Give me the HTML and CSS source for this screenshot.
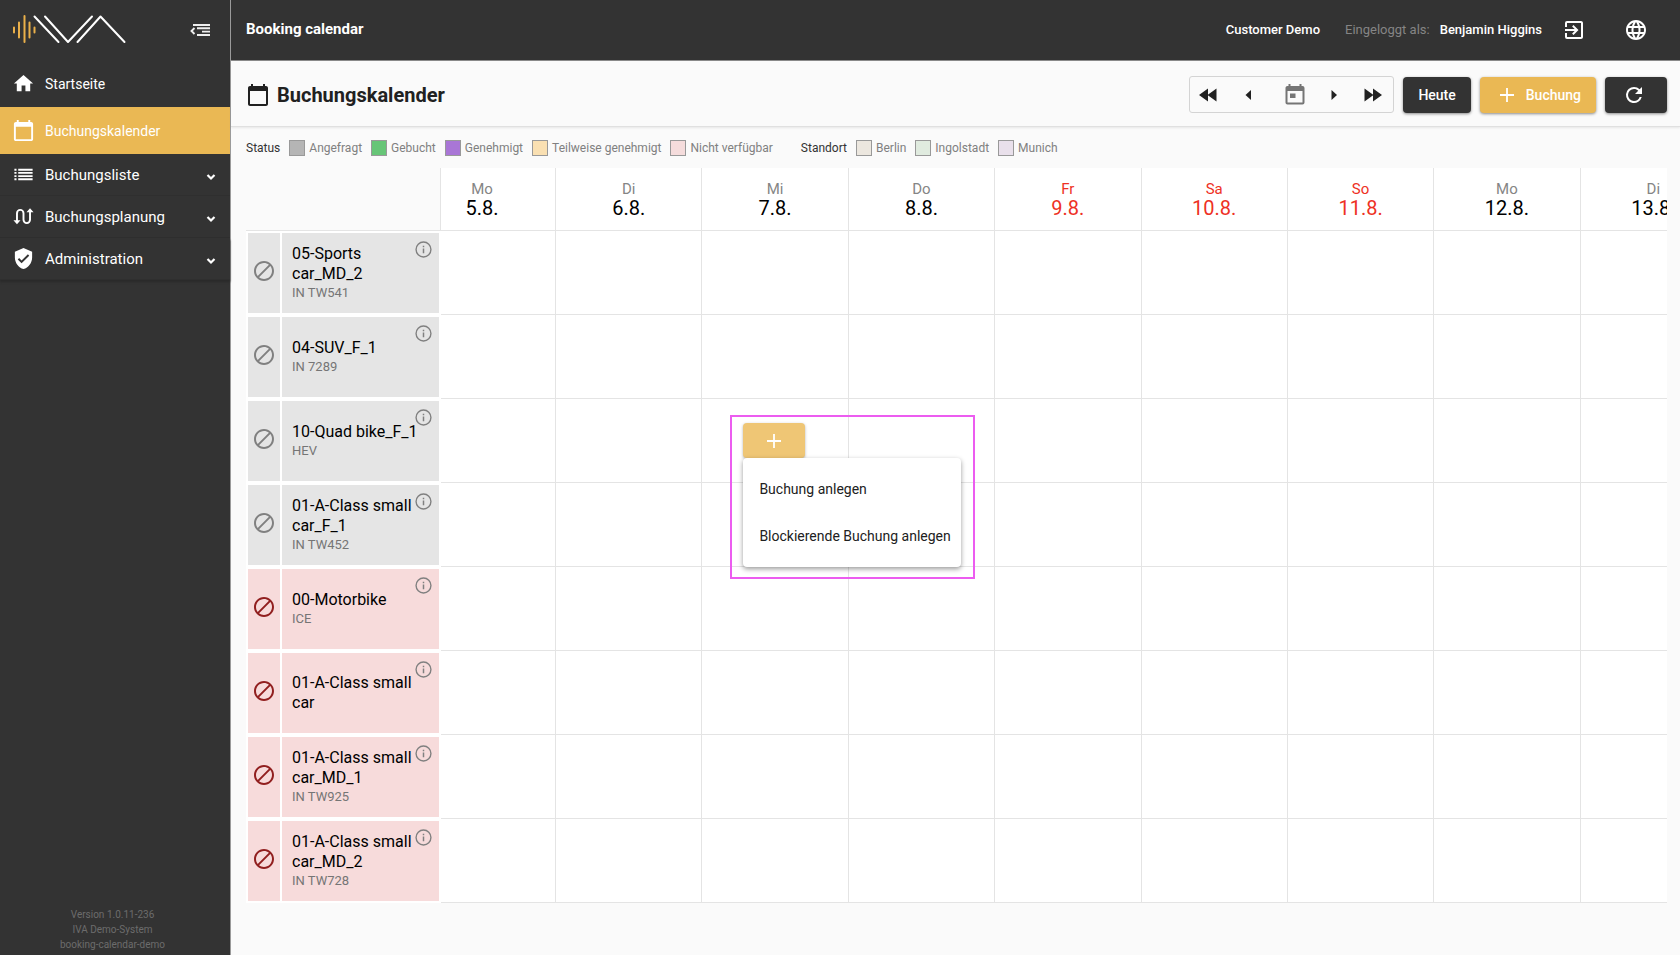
FILE: index.html
```html
<!DOCTYPE html>
<html lang="de">
<head>
<meta charset="utf-8">
<title>Buchungskalender</title>
<link rel="stylesheet" href="styles.css">
</head>
<body>
<svg class="sprite" aria-hidden="true">
  <symbol id="calendar" viewBox="0 0 24 24"><path d="M20 3h-1V1h-2v2H7V1H5v2H4c-1.100 0-2 .9-2 2v16c0 1.100.9 2 2 2h16c1.100 0 2-.9 2-2V5c0-1.100-.9-2-2-2zm0 18H4V8h16v13z"/></symbol>
  <symbol id="chevron" viewBox="0 0 12 12"><path d="M2.500 4 6 7.500 9.500 4" fill="none" stroke="currentColor" stroke-width="2.200"/></symbol>
  <symbol id="block" viewBox="0 0 24 24"><path d="M12 2C6.480 2 2 6.480 2 12s4.480 10 10 10 10-4.480 10-10S17.520 2 12 2zM4 12c0-4.420 3.580-8 8-8 1.850 0 3.550.63 4.900 1.690L5.690 16.900C4.630 15.550 4 13.850 4 12zm8 8c-1.850 0-3.550-.63-4.900-1.690L18.310 7.100C19.370 8.450 20 10.150 20 12c0 4.420-3.580 8-8 8z"/></symbol>
  <symbol id="info" viewBox="0 0 16 16"><circle cx="8" cy="8" r="7" fill="none" stroke="currentColor" stroke-width="1.300"/><path d="M7.300 7h1.400v4.500H7.300zM7.300 4.500h1.400v1.400H7.300z"/></symbol>
  <symbol id="plus" viewBox="0 0 16 16"><path d="M8 1v14M1 8h14" fill="none" stroke="currentColor" stroke-width="1.800"/></symbol>
</svg>
<div class="app">
  <aside class="sidebar">
    <div class="brand">
      <svg class="logo" viewBox="0 0 116 32" role="img" aria-label="IVA">
        <path d="M2 13.500v5M7 8.500v15M12.500 2v26M17.500 8.500v15M22.500 13.500v5" stroke="#eab04a" stroke-width="2" stroke-linecap="round"/>
        <path d="M22.500 2.500 46.500 28M33 2.500 56 28 80 2.500M65.500 28 88.500 2.500 112.500 28" fill="none" stroke="#fff" stroke-width="2" stroke-linecap="round" stroke-linejoin="round"/>
      </svg>
      <button class="collapse" type="button" aria-label="Menü einklappen">
        <svg viewBox="0 0 20 14"><path d="M3 2h17M7 5.300h13M12 8.600h8M7 12h13" fill="none" stroke="currentColor" stroke-width="1.900"/><path d="M4.500 5 1.500 8l3 3" fill="none" stroke="currentColor" stroke-width="1.900"/></svg>
      </button>
    </div>
    <nav class="menu">
      <a class="item home" href="#"><svg class="icon" viewBox="0 0 24 24"><path d="M10 20v-6h4v6h5v-8h3L12 3 2 12h3v8z"/></svg><span>Startseite</span></a>
      <a class="item active" href="#"><svg class="icon"><use href="#calendar"/></svg><span>Buchungskalender</span></a>
      <a class="item group" href="#"><svg class="icon" viewBox="0 0 24 24"><path d="M2.500 6h2.200v2H2.500zM6.500 6h15v2h-15zM2.500 9.300h2.200v2H2.500zM6.500 9.300h15v2h-15zM2.500 12.700h2.200v2H2.500zM6.500 12.700h15v2h-15zM2.500 16h2.200v2H2.500zM6.500 16h15v2h-15z"/></svg><span>Buchungsliste</span><svg class="chev"><use href="#chevron"/></svg></a>
      <a class="item group" href="#"><svg class="icon" viewBox="0 0 24 24"><path d="M5.200 17V8.500a3.400 3.400 0 0 1 6.800 0v7a3.400 3.400 0 0 0 6.800 0V7" fill="none" stroke="currentColor" stroke-width="2"/><path d="M1.500 16h7.400l-3.700 4zM15.100 7.500h7.400l-3.700-4z"/></svg><span>Buchungsplanung</span><svg class="chev"><use href="#chevron"/></svg></a>
      <a class="item group last" href="#"><svg class="icon" viewBox="0 0 24 24"><path d="M12 1 3 5v6c0 5.550 3.840 10.740 9 12 5.160-1.260 9-6.450 9-12V5l-9-4zm-2 16-4-4 1.410-1.410L10 14.170l6.590-6.590L18 9l-8 8z"/></svg><span>Administration</span><svg class="chev"><use href="#chevron"/></svg></a>
    </nav>
    <footer class="version"><p>Version 1.0.11-236</p><p>IVA Demo-System</p><p>booking-calendar-demo</p></footer>
  </aside>
  <div class="page">
    <header class="topbar">
      <strong class="title">Booking calendar</strong>
      <strong class="customer">Customer Demo</strong>
      <span class="logged">Eingeloggt als:</span>
      <strong class="user">Benjamin Higgins</strong>
      <button class="top-btn logout" type="button" aria-label="Abmelden"><svg viewBox="0 0 24 24"><path d="M10.090 15.590 11.500 17l5-5-5-5-1.410 1.410L12.670 11H3v2h9.670l-2.580 2.590zM19 3H5a2 2 0 0 0-2 2v4h2V5h14v14H5v-4H3v4a2 2 0 0 0 2 2h14c1.100 0 2-.9 2-2V5c0-1.100-.9-2-2-2z"/></svg></button>
      <button class="top-btn" type="button" aria-label="Sprache"><svg viewBox="0 0 24 24"><path d="M11.990 2C6.470 2 2 6.480 2 12s4.470 10 9.990 10C17.520 22 22 17.520 22 12S17.520 2 11.990 2zm6.930 6h-2.950a15.650 15.650 0 0 0-1.380-3.560A8.030 8.030 0 0 1 18.920 8zM12 4.040c.83 1.200 1.480 2.530 1.910 3.960h-3.820c.43-1.430 1.080-2.760 1.910-3.960zM4.260 14C4.100 13.360 4 12.690 4 12s.1-1.360.26-2h3.380c-.08.66-.14 1.320-.14 2s.06 1.340.14 2H4.260zm.82 2h2.950c.32 1.250.78 2.450 1.380 3.560A7.987 7.987 0 0 1 5.080 16zm2.950-8H5.080a7.987 7.987 0 0 1 4.330-3.560A15.650 15.650 0 0 0 8.030 8zM12 19.960c-.83-1.200-1.480-2.530-1.910-3.960h3.820c-.43 1.430-1.080 2.760-1.910 3.960zM14.340 14H9.660c-.09-.66-.16-1.320-.16-2s.07-1.350.16-2h4.680c.09.65.16 1.320.16 2s-.07 1.340-.16 2zm.25 5.560c.6-1.110 1.060-2.310 1.380-3.560h2.950a8.030 8.030 0 0 1-4.330 3.560zM16.360 14c.08-.66.14-1.320.14-2s-.06-1.340-.14-2h3.380c.16.64.26 1.310.26 2s-.1 1.360-.26 2h-3.380z"/></svg></button>
    </header>
    <div class="toolbar">
      <svg class="heading-icon"><use href="#calendar"/></svg>
      <h1>Buchungskalender</h1>
      <div class="pager">
        <button type="button" aria-label="Woche zurück"><svg viewBox="0 0 24 24"><path d="M12 5.500v13L3 12zM20.500 5.500v13L11.500 12z"/></svg></button>
        <button type="button" aria-label="Tag zurück"><svg viewBox="0 0 24 24"><path d="M15 7v10l-5.500-5z"/></svg></button>
        <button type="button" class="pick" aria-label="Datum wählen"><svg viewBox="0 0 24 24"><path d="M19.500 3H18.500V1h-2v2h-9V1h-2v2H4.500c-1.110 0-2 .9-2 2v14.500c0 1.100.89 2 2 2h15a2 2 0 0 0 2-2V5a2 2 0 0 0-2-2zm0 16.500h-15V8h15v11.500zM7 10.500h5.500V15H7z"/></svg></button>
        <button type="button" aria-label="Tag vor"><svg viewBox="0 0 24 24"><path d="M9.500 7v10l5.500-5z"/></svg></button>
        <button type="button" aria-label="Woche vor"><svg viewBox="0 0 24 24"><path d="M3.500 5.500v13l9-6.500zM12 5.500v13l9-6.500z"/></svg></button>
      </div>
      <button class="btn dark" type="button">Heute</button>
      <button class="btn gold" type="button"><svg><use href="#plus"/></svg>Buchung</button>
      <button class="btn dark refresh" type="button" aria-label="Aktualisieren"><svg viewBox="0 0 24 24"><path d="M17.650 6.350A7.958 7.958 0 0 0 12 4a8 8 0 1 0 7.730 10h-2.080A5.990 5.990 0 0 1 12 18a6 6 0 1 1 0-12c1.660 0 3.140.69 4.220 1.780L13 11h7V4l-2.350 2.350z"/></svg></button>
    </div>
    <div class="legend">
      <b>Status</b>
      <span><i class="sw requested"></i>Angefragt</span>
      <span><i class="sw booked"></i>Gebucht</span>
      <span><i class="sw approved"></i>Genehmigt</span>
      <span><i class="sw partial"></i>Teilweise genehmigt</span>
      <span><i class="sw unavailable"></i>Nicht verfügbar</span>
      <b class="place">Standort</b>
      <span><i class="sw berlin"></i>Berlin</span>
      <span><i class="sw ingolstadt"></i>Ingolstadt</span>
      <span><i class="sw munich"></i>Munich</span>
    </div>
    <main class="calendar">
      <table>
        <colgroup><col class="c-state"><col class="c-name"><col class="c-first"><col span="8"></colgroup>
        <thead><tr><td class="corner" colspan="2"></td>
          <th class="first"><small>Mo</small>5.8.</th><th><small>Di</small>6.8.</th><th><small>Mi</small>7.8.</th><th><small>Do</small>8.8.</th><th class="free"><small>Fr</small>9.8.</th><th class="free"><small>Sa</small>10.8.</th><th class="free"><small>So</small>11.8.</th><th><small>Mo</small>12.8.</th><th><small>Di</small>13.8.</th></tr></thead>
        <tbody>
          <tr><td class="state"><svg><use href="#block"/></svg></td><th class="res"><div class="card">05-Sports car_MD_2<small>IN TW541</small></div><button type="button" aria-label="Info"><svg><use href="#info"/></svg></button></th><td></td><td></td><td></td><td></td><td></td><td></td><td></td><td></td><td></td></tr>
          <tr><td class="state"><svg><use href="#block"/></svg></td><th class="res"><div class="card">04-SUV_F_1<small>IN 7289</small></div><button type="button" aria-label="Info"><svg><use href="#info"/></svg></button></th><td></td><td></td><td></td><td></td><td></td><td></td><td></td><td></td><td></td></tr>
          <tr><td class="state"><svg><use href="#block"/></svg></td><th class="res"><div class="card">10-Quad bike_F_1<small>HEV</small></div><button type="button" aria-label="Info"><svg><use href="#info"/></svg></button></th><td></td><td></td>
            <td class="open"><div class="frame"><button class="add" type="button" aria-label="Hinzufügen"><svg><use href="#plus"/></svg></button><div class="popup"><button type="button">Buchung anlegen</button><button type="button">Blockierende Buchung anlegen</button></div></div></td>
            <td></td><td></td><td></td><td></td><td></td><td></td></tr>
          <tr><td class="state"><svg><use href="#block"/></svg></td><th class="res"><div class="card">01-A-Class small car_F_1<small>IN TW452</small></div><button type="button" aria-label="Info"><svg><use href="#info"/></svg></button></th><td></td><td></td><td></td><td></td><td></td><td></td><td></td><td></td><td></td></tr>
          <tr class="off"><td class="state"><svg><use href="#block"/></svg></td><th class="res"><div class="card">00-Motorbike<small>ICE</small></div><button type="button" aria-label="Info"><svg><use href="#info"/></svg></button></th><td></td><td></td><td></td><td></td><td></td><td></td><td></td><td></td><td></td></tr>
          <tr class="off"><td class="state"><svg><use href="#block"/></svg></td><th class="res"><div class="card">01-A-Class small car</div><button type="button" aria-label="Info"><svg><use href="#info"/></svg></button></th><td></td><td></td><td></td><td></td><td></td><td></td><td></td><td></td><td></td></tr>
          <tr class="off"><td class="state"><svg><use href="#block"/></svg></td><th class="res"><div class="card">01-A-Class small car_MD_1<small>IN TW925</small></div><button type="button" aria-label="Info"><svg><use href="#info"/></svg></button></th><td></td><td></td><td></td><td></td><td></td><td></td><td></td><td></td><td></td></tr>
          <tr class="off"><td class="state"><svg><use href="#block"/></svg></td><th class="res"><div class="card">01-A-Class small car_MD_2<small>IN TW728</small></div><button type="button" aria-label="Info"><svg><use href="#info"/></svg></button></th><td></td><td></td><td></td><td></td><td></td><td></td><td></td><td></td><td></td></tr>
        </tbody>
      </table>
    </main>
  </div>
</div>
</body>
</html>
```
FILE: styles.css
```css
* { box-sizing: border-box; }
body { margin: 0; background: #fafafa; color: #212121; font-family: Roboto, "Liberation Sans", sans-serif; font-size: 14px; }
button { margin: 0; padding: 0; border: 0; background: none; color: inherit; font: inherit; cursor: pointer; }
svg { display: block; fill: currentColor; flex: none; }
p { margin: 0; }
.sprite { display: none; }
.app { display: flex; min-height: 100vh; }

.sidebar { display: flex; flex-direction: column; flex: none; width: 231px; background: #333; color: #fff; border-right: 1px solid #9a9a9a; }
.brand { display: flex; align-items: center; justify-content: space-between; height: 60px; padding: 0 20px 0 12px; }
.logo { width: 116px; height: 32px; }
.collapse svg { width: 20px; height: 14px; color: #eee; }
.item { display: flex; align-items: center; height: 42px; padding: 0 12px; color: #fff; text-decoration: none; }
.item.home { height: 47px; }
.item.active { height: 47px; background: #eab854; }
.item.group { font-size: 15px; border-bottom: 1px solid #2f2f2f; }
.item.last { box-shadow: 0 2px 2px #2a2a2a; }
.icon { width: 23px; height: 23px; margin-right: 10px; }
.chev { width: 12px; height: 12px; margin: 5px 1px 0 auto; }
.version { margin-top: auto; padding: 0 5px 3px 0; text-align: center; font-size: 10px; line-height: 15px; color: #6c6c6c; }

.page { flex: 1; min-width: 0; }
.topbar { display: flex; align-items: center; height: 61px; padding: 0 32px 2px 15px; background: #333; color: #fff; border-bottom: 1px solid #8a8a8a; }
.topbar strong { font-weight: 500; font-size: 13px; }
.topbar .title { font-size: 15px; font-weight: 700; margin-right: auto; }
.logged { margin: 0 10px 0 25px; font-size: 13px; color: #858585; }
.top-btn svg { width: 24px; height: 24px; }
.logout { margin: 0 38px 0 20px; }
.top-btn { padding-top: 2px; }

.toolbar { display: flex; align-items: center; height: 66px; padding: 2px 13px 0 15px; border-bottom: 1px solid #e0e0e0; box-shadow: 0 1px 2px rgba(0,0,0,.08); }
.heading-icon { width: 24px; height: 24px; margin-right: 7px; }
h1 { margin: 0 auto 0 0; font-size: 20px; font-weight: 700; }
.pager { display: flex; align-items: center; justify-content: space-between; width: 205px; height: 37px; padding: 0 8px 0 6px; border: 1px solid #d4d4d4; border-radius: 3px; }
.pager svg { width: 24px; height: 24px; }
.pager .pick { padding-left: 8px; color: #757575; }
.btn { display: flex; align-items: center; justify-content: center; height: 36px; margin-left: 9px; padding: 0 15px; border-radius: 4px; color: #fff; font-weight: 500; box-shadow: 0 1px 3px rgba(0,0,0,.45); }
.dark { background: #333; }
.gold { background: #eab854; padding: 0 15px 0 19px; }
.gold svg { width: 16px; height: 16px; margin-right: 11px; }
.refresh { width: 62px; padding: 0 4px 0 0; }
.refresh svg { width: 24px; height: 24px; }

.legend { display: flex; align-items: center; flex-wrap: wrap; gap: 9px; min-height: 41px; padding: 0 15px; font-size: 12px; color: #808080; }
.legend b { font-weight: 400; color: #333; }
.legend span { display: flex; align-items: center; gap: 4px; }
.legend .place { margin-left: 19px; }
.sw { width: 16px; height: 16px; border: 1px solid #999; }
.requested { background: #b5b5b5; }
.booked { background: #67c577; }
.approved { background: #a976d6; }
.partial { background: #fae0b2; }
.unavailable { background: #f5dcdc; }
.berlin { background: #ece7df; }
.ingolstadt { background: #e0ebdf; }
.munich { background: #e9e0eb; }

.calendar { margin: 0 13px 0 15px; overflow: hidden; }
table { width: 1481px; table-layout: fixed; border-collapse: separate; border-spacing: 0; }
.c-state { width: 34px; }
.c-name { width: 161px; }
.c-first { width: 115px; }
td, th { padding: 0; background: #fff; border-right: 1px solid #e4e4e4; border-bottom: 1px solid #e4e4e4; font-weight: 400; }
thead th { height: 63px; padding-top: 2px; font-size: 20px; line-height: 21px; color: #000; }
thead small { display: block; font-size: 15px; line-height: 17px; color: #858585; }
thead .first { padding-right: 32px; }
thead .corner { background: #fafafa; }
thead .free, .free small { color: #ee3124; }
tbody tr { height: 84px; color: #808080; }
.state, .res { border: 2px solid #fff; border-right-width: 0; background: #e5e5e5; }
.state { padding-bottom: 4px; }
.state svg { width: 24px; height: 24px; margin: 0 auto; }
.res { position: relative; border-right-width: 2px; text-align: left; font-size: 16px; line-height: 20px; color: #000; }
.card { padding: 0 20px 0 10px; }
.card small { display: block; font-size: 13px; line-height: 18px; color: #757575; }
.off { color: #911f1f; }
.off .state, .off .res { background: #f7dbdb; }
.res button { position: absolute; top: 8px; right: 7px; color: #808080; }
.res button svg { width: 17px; height: 17px; }

.open { position: relative; }
.frame { position: absolute; z-index: 2; left: 28px; top: 16px; width: 245px; padding: 6px 11px 10px; border: 2px solid #ec5cf0; }
.add { display: flex; align-items: center; justify-content: center; width: 62px; height: 35px; border-radius: 4px; background: #efc675; color: #fff; box-shadow: 0 1px 3px rgba(0,0,0,.3); }
.add svg { width: 16px; height: 16px; }
.popup { position: relative; width: 218px; padding: 7px 0 8px; border-radius: 4px; background: #fff; box-shadow: 0 2px 5px rgba(0,0,0,.4); }
.popup button { display: block; width: 100%; height: 47px; padding-left: 16px; text-align: left; color: #212121; }
```
